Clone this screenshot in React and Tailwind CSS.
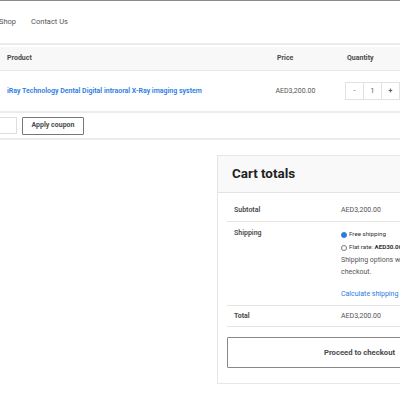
export default function App() {
  const font = { fontFamily: "Roboto, 'Liberation Sans', sans-serif" };
  return (
    <div className="w-[400px] h-[400px] overflow-hidden bg-white relative" style={font}>
      <div className="border-t border-[#8a8a8a]" />
      <div className="h-[42px] flex items-center gap-[15px] ml-[-1px] text-[7.5px] text-[#555]">
        <span>Shop</span>
        <span>Contact Us</span>
      </div>
      <div className="h-[2px] bg-[#ececec]" />
      <div className="h-[2px]" />
      <div className="h-[24px] bg-[#f8f8f8] border-b border-[#e6e6e6] flex items-center text-[7px] font-bold text-[#4a4a4a]">
        <div className="w-[277px] pl-[7px]">Product</div>
        <div className="w-[70px]">Price</div>
        <div>Quantity</div>
      </div>
      <div className="h-[42px] border-b-2 border-[#ececec] flex items-center text-[7px]">
        <div className="w-[277px] pl-[7px] text-[#2a7be4] font-semibold whitespace-nowrap">iRay Technology Dental Digital intraoral X-Ray imaging system</div>
        <div className="w-[70px] text-[#555]">AED3,200.00</div>
        <div className="flex h-[18px] border border-[#e2e2e2] text-[#555] text-[7px]">
          <div className="w-[18px] flex items-center justify-center border-r border-[#e2e2e2]">-</div>
          <div className="w-[18px] flex items-center justify-center border-r border-[#e2e2e2]">1</div>
          <div className="w-[17px] flex items-center justify-center font-bold">+</div>
        </div>
      </div>
      <div className="h-[27px] border-b-2 border-[#ececec] flex items-center gap-[5px]">
        <div className="w-[60px] h-[17px] ml-[-43px] border border-[#dedede]" />
        <div className="h-[18px] w-[62px] border border-[#777] rounded-[1px] flex items-center justify-center text-[7px] font-bold text-[#4a4a4a]">Apply coupon</div>
      </div>
      <div className="ml-[217px] mt-[15px] w-[280px] h-[229px] border border-[#e6e6e6] flex flex-col">
        <div className="h-[37px] bg-[#f9f9f9] border-b border-[#e3e3e3] flex items-center pl-[14px] text-[13.4px] font-bold text-[#222]">Cart totals</div>
        <div className="mx-[9px] flex flex-col text-[7px]">
          <div className="h-[29px] border-b border-[#e4e4e4] flex items-center pt-[7px]">
            <div className="w-[114px] pl-[7px] font-semibold text-[#4a4a4a]">Subtotal</div>
            <div className="text-[#555]">AED3,200.00</div>
          </div>
          <div className="h-[84px] border-b border-[#e4e4e4] flex pt-[6px]">
            <div className="w-[114px] pl-[7px] font-semibold text-[#4a4a4a]">Shipping</div>
            <div className="flex flex-col text-[#555] whitespace-nowrap">
              <div className="flex items-center gap-[2px] h-[13px] text-[6.2px] text-[#333]">
                <span className="w-[6px] h-[6px] rounded-full bg-[#2a7be4] border border-[#2a7be4] inline-block" />
                <span>Free shipping</span>
              </div>
              <div className="flex items-center gap-[2px] h-[13px] text-[6.2px] text-[#333]">
                <span className="w-[6px] h-[6px] rounded-full border border-[#777] inline-block" />
                <span>Flat rate: <b>AED30.00</b></span>
              </div>
              <div className="leading-[12px]">Shipping options will be updated during</div>
              <div className="leading-[12px]">checkout.</div>
              <div className="mt-[11px] text-[#2a7be4]">Calculate shipping</div>
            </div>
          </div>
          <div className="h-[21px] border-b border-[#e4e4e4] flex items-center">
            <div className="w-[114px] pl-[7px] font-bold text-[#4a4a4a]">Total</div>
            <div className="text-[#555]">AED3,200.00</div>
          </div>
          <div className="mt-[10px] h-[31px] border border-[#888] rounded-[1px] flex items-center justify-center text-[7.7px] font-bold text-[#4a4a4a] w-[265px]">
            Proceed to checkout
          </div>
        </div>
      </div>
    </div>
  );
}
